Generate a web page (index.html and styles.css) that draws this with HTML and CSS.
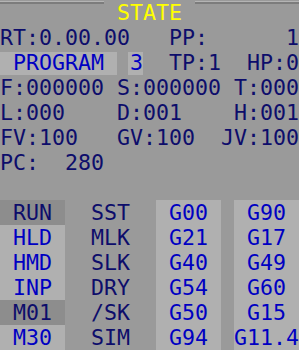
FILE: index.html
```html
<!doctype html>
<html>
  <head>
    <meta charset="utf-8">
    <link rel="stylesheet" href="styles.css">
  </head>
  <body>
    <div class="screen">
      <div class="row title">
        <span class="rule"></span><span class="title-text"> STATE </span><span class="rule"></span>
      </div>
      <div class="row">RT:0.00.00   PP:      1</div>
      <div class="row">
        <span class="box lit w9"> PROGRAM </span><span class="w1"> </span><span class="box lit num">3</span><span>  TP:1  HP:0</span>
      </div>
      <div class="row">F:000000 S:000000 T:000</div>
      <div class="row">L:000    D:001    H:001</div>
      <div class="row">FV:100   GV:100  JV:100</div>
      <div class="row">PC:  280</div>
      <div class="row"></div>

      <div class="row">
        <span class="cell w5 dim"> RUN</span><span class="cell w7">  SST</span><span class="cell w5 lit"> G00</span><span class="cell w1"></span><span class="cell w5 lit"> G90</span>
      </div>
      <div class="row">
        <span class="cell w5 lit"> HLD</span><span class="cell w7">  MLK</span><span class="cell w5 lit"> G21</span><span class="cell w1"></span><span class="cell w5 lit"> G17</span>
      </div>
      <div class="row">
        <span class="cell w5 lit"> HMD</span><span class="cell w7">  SLK</span><span class="cell w5 lit"> G40</span><span class="cell w1"></span><span class="cell w5 lit"> G49</span>
      </div>
      <div class="row">
        <span class="cell w5 lit"> INP</span><span class="cell w7">  DRY</span><span class="cell w5 lit"> G54</span><span class="cell w1"></span><span class="cell w5 lit"> G60</span>
      </div>
      <div class="row">
        <span class="cell w5 dim"> M01</span><span class="cell w7">  /SK</span><span class="cell w5 lit"> G50</span><span class="cell w1"></span><span class="cell w5 lit"> G15</span>
      </div>
      <div class="row">
        <span class="cell w5 lit"> M30</span><span class="cell w7">  SIM</span><span class="cell w5 lit"> G94</span><span class="cell w1"></span><span class="cell w5 lit">G11.4</span>
      </div>
    </div>
  </body>
</html>
```

FILE: styles.css
```css
body {
  margin: 0;
  background: #9a9a9a;
}
.screen {
  width: 299px;
  height: 350px;
  overflow: hidden;
  background: #9a9a9a;
  color: #0d0d6b;
  font-family: "DejaVu Sans Mono", monospace;
  font-size: 21.6px;
}
.row {
  display: flex;
  align-items: flex-start;
  height: 25px;
  line-height: 25px;
  white-space: pre;
}
.title .rule {
  flex: 1;
  height: 2px;
  margin-top: 1px;
  background: #7c7c7c;
  border-top: 1px solid #b4b4b4;
}
.title-text {
  width: 91px;
  color: #ffff00;
}
.cell {
  display: block;
  height: 25px;
}
.w1 { width: 13px; }
.w5 { width: 65px; }
.w7 { width: 91px; }
.w9 { width: 117px; }
.lit {
  background: #b0b0b0;
  color: #0000c2;
}
.dim {
  background: #8d8d8d;
}
.box {
  margin-top: 2px;
  height: 23px;
  line-height: 21px;
}
.num {
  width: 15px;
  margin-left: -2px;
  padding-left: 2px;
  box-sizing: border-box;
}
```
